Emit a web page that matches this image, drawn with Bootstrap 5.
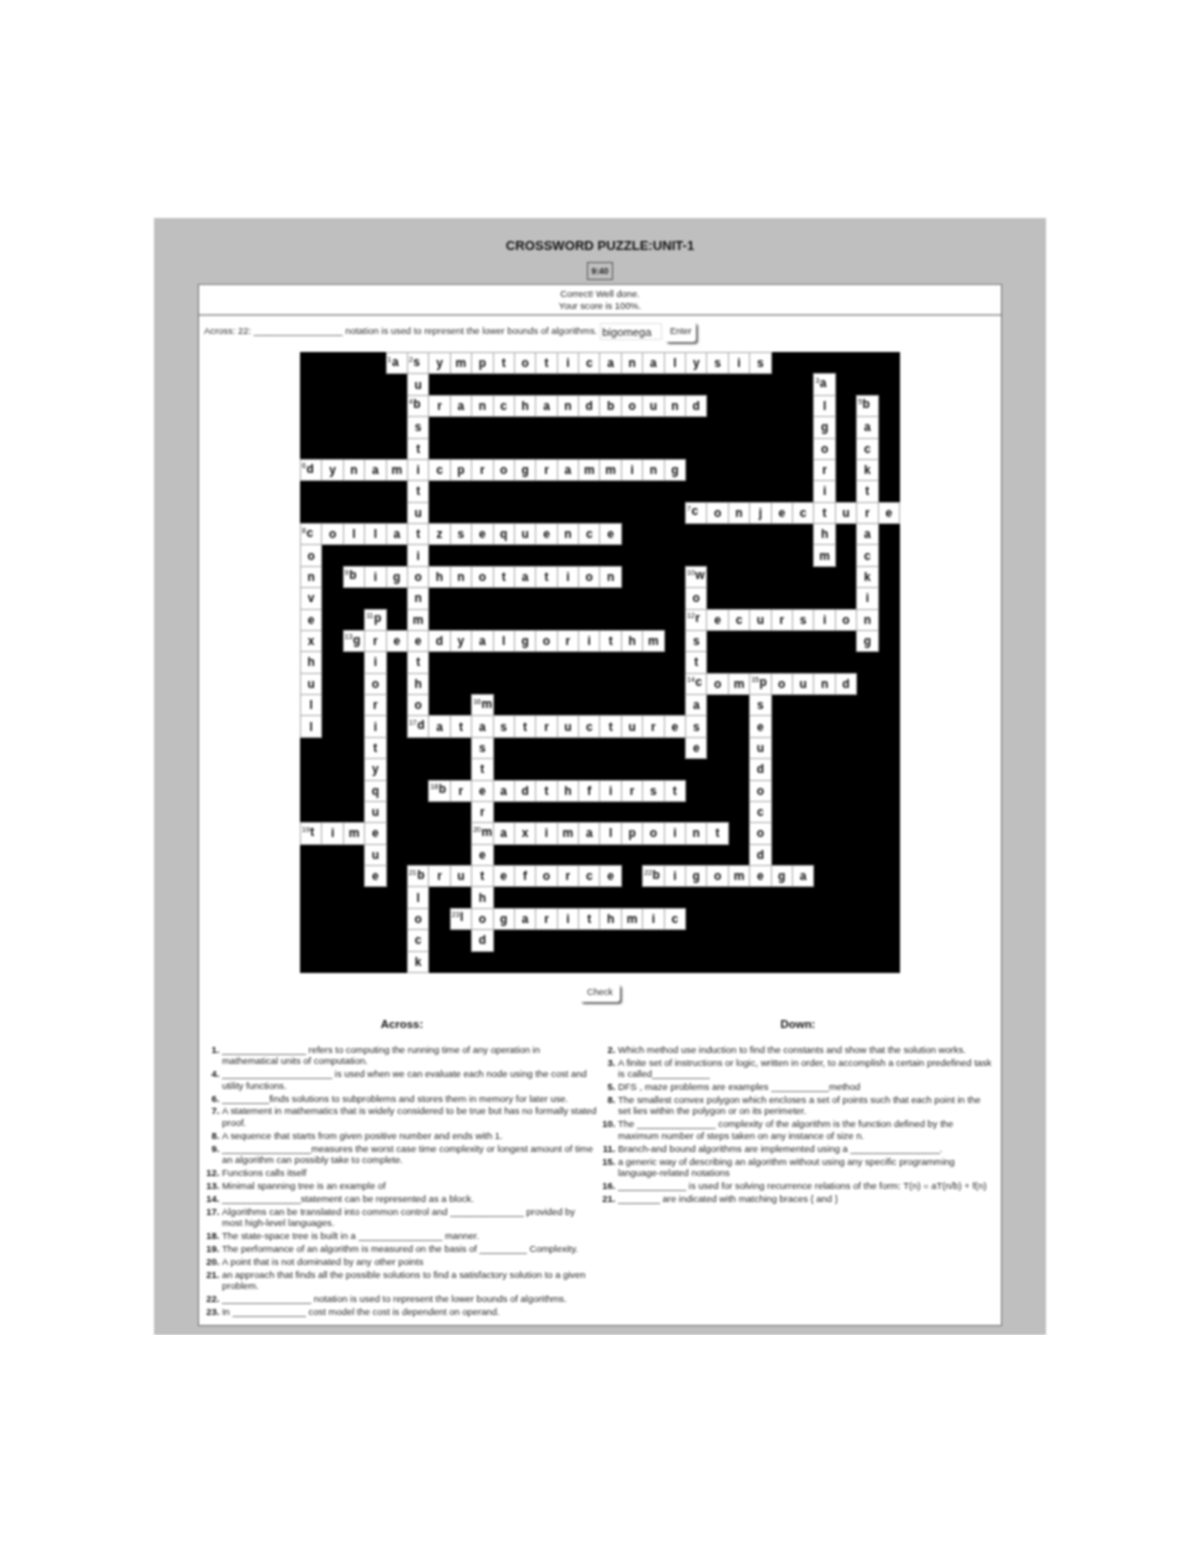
<!DOCTYPE html>
<html lang="en">
<head>
<meta charset="utf-8">
<title>Crossword Puzzle</title>
<link href="https://cdn.jsdelivr.net/npm/bootstrap@5.3.0/dist/css/bootstrap.min.css" rel="stylesheet">
<style>
body{background:#fff;font-family:"Liberation Sans",Arial,sans-serif;color:#333;}
.sheet{width:892px;height:1117px;margin:218px 0 0 154px;background:#bfbfbf;padding:20px 44px 0;filter:blur(.8px);}
.ttl{font-size:13.1px;line-height:16px;font-weight:700;margin:0 0 8px;color:#111;}
.clock{display:inline-block;font-size:8.5px;line-height:16px;font-weight:700;padding:0 3px;border:1px solid #555;color:#222;}
.clockline{height:20px;line-height:0;margin-bottom:2px;}
.panel{height:1042px;border:1px solid #6a6a6a;border-top-color:#7a7a7a;}
.msg{font-size:9.3px;line-height:11.5px;height:31px;padding-top:4px;border-bottom:2px solid #a8a8a8;color:#222;}
.clue{font-size:9.42px;height:36px;padding:0 0 5px 5px;color:#2c2c2c;}
.clue input{width:62px;height:17px;margin:0 3px 0 3px;padding:0 1px;font-size:11.2px;line-height:15px;color:#222;border:1px solid #e0e0e0;border-radius:0;}
.push{font-size:9.1px;line-height:1;color:#2c2c2c;background:#fff;border:0;border-radius:3px;box-shadow:2px 2px 2px #5f5f5f;padding:0;}
.push:hover{background:#fff;color:#2c2c2c;}
.p1{width:31px;height:20px;}
.p2{width:40px;height:18px;}
.cw{width:600px;height:620px;table-layout:fixed;background:#000;margin:0 auto;}
.cw td{height:21.38px;padding:0;text-align:center;vertical-align:middle;background:#fff;border:1px solid #a8a8a8;font-size:12px;line-height:1;font-weight:700;color:#0c0c0c;}
.cw td.bk{background:#000;border:0;}
.cw td.nb{text-align:left;padding:0 0 3px 1px;}
.cn{font-size:7px;font-weight:400;top:-.6em;margin-right:.5px;line-height:0;color:#000;}
.checkline{height:44px;padding-top:11px;}
.cols{padding:0 5px;}
.hd{font-size:11.4px;line-height:14px;font-weight:700;margin:0 0 13px;color:#111;}
.hints{margin:0;padding:0 0 0 18px;list-style-position:outside;font-size:9.45px;line-height:11.5px;color:#222;white-space:nowrap;}
.hints li{margin-bottom:1.37px;}
.hints li::marker{font-weight:700;color:#111;}
</style>
</head>
<body>
<div class="sheet">
  <h1 class="ttl text-center">CROSSWORD PUZZLE:UNIT-1</h1>
  <div class="clockline text-center"><span class="clock">9:40</span></div>
  <div class="panel bg-white">
    <div class="msg text-center">Correct! Well done.<br>Your score is 100%.</div>
    <div class="clue d-flex align-items-center"><span>Across: 22: _________________ notation is used to represent the lower bounds of algorithms.</span><input class="form-control" type="text" value="bigomega"><button class="btn push p1" type="button">Enter</button></div>
    <table class="cw">
      <tr><td class="bk" colspan="4"></td><td class="nb"><sup class="cn">1</sup>a</td><td class="nb"><sup class="cn">2</sup>s</td><td>y</td><td>m</td><td>p</td><td>t</td><td>o</td><td>t</td><td>i</td><td>c</td><td>a</td><td>n</td><td>a</td><td>l</td><td>y</td><td>s</td><td>i</td><td>s</td><td class="bk" colspan="6"></td></tr>
      <tr><td class="bk" colspan="5"></td><td>u</td><td class="bk" colspan="18"></td><td class="nb"><sup class="cn">3</sup>a</td><td class="bk" colspan="3"></td></tr>
      <tr><td class="bk" colspan="5"></td><td class="nb"><sup class="cn">4</sup>b</td><td>r</td><td>a</td><td>n</td><td>c</td><td>h</td><td>a</td><td>n</td><td>d</td><td>b</td><td>o</td><td>u</td><td>n</td><td>d</td><td class="bk" colspan="5"></td><td>l</td><td class="bk"></td><td class="nb"><sup class="cn">5</sup>b</td><td class="bk"></td></tr>
      <tr><td class="bk" colspan="5"></td><td>s</td><td class="bk" colspan="18"></td><td>g</td><td class="bk"></td><td>a</td><td class="bk"></td></tr>
      <tr><td class="bk" colspan="5"></td><td>t</td><td class="bk" colspan="18"></td><td>o</td><td class="bk"></td><td>c</td><td class="bk"></td></tr>
      <tr><td class="nb"><sup class="cn">6</sup>d</td><td>y</td><td>n</td><td>a</td><td>m</td><td>i</td><td>c</td><td>p</td><td>r</td><td>o</td><td>g</td><td>r</td><td>a</td><td>m</td><td>m</td><td>i</td><td>n</td><td>g</td><td class="bk" colspan="6"></td><td>r</td><td class="bk"></td><td>k</td><td class="bk"></td></tr>
      <tr><td class="bk" colspan="5"></td><td>t</td><td class="bk" colspan="18"></td><td>i</td><td class="bk"></td><td>t</td><td class="bk"></td></tr>
      <tr><td class="bk" colspan="5"></td><td>u</td><td class="bk" colspan="12"></td><td class="nb"><sup class="cn">7</sup>c</td><td>o</td><td>n</td><td>j</td><td>e</td><td>c</td><td>t</td><td>u</td><td>r</td><td>e</td></tr>
      <tr><td class="nb"><sup class="cn">8</sup>c</td><td>o</td><td>l</td><td>l</td><td>a</td><td>t</td><td>z</td><td>s</td><td>e</td><td>q</td><td>u</td><td>e</td><td>n</td><td>c</td><td>e</td><td class="bk" colspan="9"></td><td>h</td><td class="bk"></td><td>a</td><td class="bk"></td></tr>
      <tr><td>o</td><td class="bk" colspan="4"></td><td>i</td><td class="bk" colspan="18"></td><td>m</td><td class="bk"></td><td>c</td><td class="bk"></td></tr>
      <tr><td>n</td><td class="bk"></td><td class="nb"><sup class="cn">9</sup>b</td><td>i</td><td>g</td><td>o</td><td>h</td><td>n</td><td>o</td><td>t</td><td>a</td><td>t</td><td>i</td><td>o</td><td>n</td><td class="bk" colspan="3"></td><td class="nb"><sup class="cn">10</sup>w</td><td class="bk" colspan="7"></td><td>k</td><td class="bk"></td></tr>
      <tr><td>v</td><td class="bk" colspan="4"></td><td>n</td><td class="bk" colspan="12"></td><td>o</td><td class="bk" colspan="7"></td><td>i</td><td class="bk"></td></tr>
      <tr><td>e</td><td class="bk" colspan="2"></td><td class="nb"><sup class="cn">11</sup>p</td><td class="bk"></td><td>m</td><td class="bk" colspan="12"></td><td class="nb"><sup class="cn">12</sup>r</td><td>e</td><td>c</td><td>u</td><td>r</td><td>s</td><td>i</td><td>o</td><td>n</td><td class="bk"></td></tr>
      <tr><td>x</td><td class="bk"></td><td class="nb"><sup class="cn">13</sup>g</td><td>r</td><td>e</td><td>e</td><td>d</td><td>y</td><td>a</td><td>l</td><td>g</td><td>o</td><td>r</td><td>i</td><td>t</td><td>h</td><td>m</td><td class="bk"></td><td>s</td><td class="bk" colspan="7"></td><td>g</td><td class="bk"></td></tr>
      <tr><td>h</td><td class="bk" colspan="2"></td><td>i</td><td class="bk"></td><td>t</td><td class="bk" colspan="12"></td><td>t</td><td class="bk" colspan="9"></td></tr>
      <tr><td>u</td><td class="bk" colspan="2"></td><td>o</td><td class="bk"></td><td>h</td><td class="bk" colspan="12"></td><td class="nb"><sup class="cn">14</sup>c</td><td>o</td><td>m</td><td class="nb"><sup class="cn">15</sup>p</td><td>o</td><td>u</td><td>n</td><td>d</td><td class="bk" colspan="2"></td></tr>
      <tr><td>l</td><td class="bk" colspan="2"></td><td>r</td><td class="bk"></td><td>o</td><td class="bk" colspan="2"></td><td class="nb"><sup class="cn">16</sup>m</td><td class="bk" colspan="9"></td><td>a</td><td class="bk" colspan="2"></td><td>s</td><td class="bk" colspan="6"></td></tr>
      <tr><td>l</td><td class="bk" colspan="2"></td><td>i</td><td class="bk"></td><td class="nb"><sup class="cn">17</sup>d</td><td>a</td><td>t</td><td>a</td><td>s</td><td>t</td><td>r</td><td>u</td><td>c</td><td>t</td><td>u</td><td>r</td><td>e</td><td>s</td><td class="bk" colspan="2"></td><td>e</td><td class="bk" colspan="6"></td></tr>
      <tr><td class="bk" colspan="3"></td><td>t</td><td class="bk" colspan="4"></td><td>s</td><td class="bk" colspan="9"></td><td>e</td><td class="bk" colspan="2"></td><td>u</td><td class="bk" colspan="6"></td></tr>
      <tr><td class="bk" colspan="3"></td><td>y</td><td class="bk" colspan="4"></td><td>t</td><td class="bk" colspan="12"></td><td>d</td><td class="bk" colspan="6"></td></tr>
      <tr><td class="bk" colspan="3"></td><td>q</td><td class="bk" colspan="2"></td><td class="nb"><sup class="cn">18</sup>b</td><td>r</td><td>e</td><td>a</td><td>d</td><td>t</td><td>h</td><td>f</td><td>i</td><td>r</td><td>s</td><td>t</td><td class="bk" colspan="3"></td><td>o</td><td class="bk" colspan="6"></td></tr>
      <tr><td class="bk" colspan="3"></td><td>u</td><td class="bk" colspan="4"></td><td>r</td><td class="bk" colspan="12"></td><td>c</td><td class="bk" colspan="6"></td></tr>
      <tr><td class="nb"><sup class="cn">19</sup>t</td><td>i</td><td>m</td><td>e</td><td class="bk" colspan="4"></td><td class="nb"><sup class="cn">20</sup>m</td><td>a</td><td>x</td><td>i</td><td>m</td><td>a</td><td>l</td><td>p</td><td>o</td><td>i</td><td>n</td><td>t</td><td class="bk"></td><td>o</td><td class="bk" colspan="6"></td></tr>
      <tr><td class="bk" colspan="3"></td><td>u</td><td class="bk" colspan="4"></td><td>e</td><td class="bk" colspan="12"></td><td>d</td><td class="bk" colspan="6"></td></tr>
      <tr><td class="bk" colspan="3"></td><td>e</td><td class="bk"></td><td class="nb"><sup class="cn">21</sup>b</td><td>r</td><td>u</td><td>t</td><td>e</td><td>f</td><td>o</td><td>r</td><td>c</td><td>e</td><td class="bk"></td><td class="nb"><sup class="cn">22</sup>b</td><td>i</td><td>g</td><td>o</td><td>m</td><td>e</td><td>g</td><td>a</td><td class="bk" colspan="4"></td></tr>
      <tr><td class="bk" colspan="5"></td><td>l</td><td class="bk" colspan="2"></td><td>h</td><td class="bk" colspan="19"></td></tr>
      <tr><td class="bk" colspan="5"></td><td>o</td><td class="bk"></td><td class="nb"><sup class="cn">23</sup>l</td><td>o</td><td>g</td><td>a</td><td>r</td><td>i</td><td>t</td><td>h</td><td>m</td><td>i</td><td>c</td><td class="bk" colspan="10"></td></tr>
      <tr><td class="bk" colspan="5"></td><td>c</td><td class="bk" colspan="2"></td><td>d</td><td class="bk" colspan="19"></td></tr>
      <tr><td class="bk" colspan="5"></td><td>k</td><td class="bk" colspan="22"></td></tr>
    </table>
    <div class="checkline d-flex justify-content-center align-items-start"><button class="btn push p2" type="button">Check</button></div>
    <div class="row g-0 cols">
      <div class="col-6">
        <h2 class="hd text-center">Across:</h2>
        <ol class="hints">
          <li value="1">________________ refers to computing the running time of any operation in<br>mathematical units of computation.</li>
          <li value="4">_____________________ is used when we can evaluate each node using the cost and<br>utility functions.</li>
          <li value="6">_________finds solutions to subproblems and stores them in memory for later use.</li>
          <li value="7">A statement in mathematics that is widely considered to be true but has no formally stated<br>proof.</li>
          <li value="8">A sequence that starts from given positive number and ends with 1.</li>
          <li value="9">_________________measures the worst case time complexity or longest amount of time<br>an algorithm can possibly take to complete.</li>
          <li value="12">Functions calls itself</li>
          <li value="13">Minimal spanning tree is an example of</li>
          <li value="14">_______________statement can be represented as a block.</li>
          <li value="17">Algorithms can be translated into common control and ______________ provided by<br>most high-level languages.</li>
          <li value="18">The state-space tree is built in a ________________ manner.</li>
          <li value="19">The performance of an algorithm is measured on the basis of _________ Complexity.</li>
          <li value="20">A point that is not dominated by any other points</li>
          <li value="21">an approach that finds all the possible solutions to find a satisfactory solution to a given<br>problem.</li>
          <li value="22">_________________ notation is used to represent the lower bounds of algorithms.</li>
          <li value="23">In ______________ cost model the cost is dependent on operand.</li>
        </ol>
      </div>
      <div class="col-6">
        <h2 class="hd text-center">Down:</h2>
        <ol class="hints">
          <li value="2">Which method use induction to find the constants and show that the solution works.</li>
          <li value="3">A finite set of instructions or logic, written in order, to accomplish a certain predefined task<br>is called___________</li>
          <li value="5">DFS , maze problems are examples ___________method</li>
          <li value="8">The smallest convex polygon which encloses a set of points such that each point in the<br>set lies within the polygon or on its perimeter.</li>
          <li value="10">The _______________ complexity of the algorithm is the function defined by the<br>maximum number of steps taken on any instance of size n.</li>
          <li value="11">Branch-and bound algorithms are implemented using a _________________.</li>
          <li value="15">a generic way of describing an algorithm without using any specific programming<br>language-related notations</li>
          <li value="16">_____________ is used for solving recurrence relations of the form: T(n) = aT(n/b) + f(n)</li>
          <li value="21">________ are indicated with matching braces { and }</li>
        </ol>
      </div>
    </div>
  </div>
</div>
<script src="https://cdn.jsdelivr.net/npm/bootstrap@5.3.0/dist/js/bootstrap.bundle.min.js"></script>
</body>
</html>
